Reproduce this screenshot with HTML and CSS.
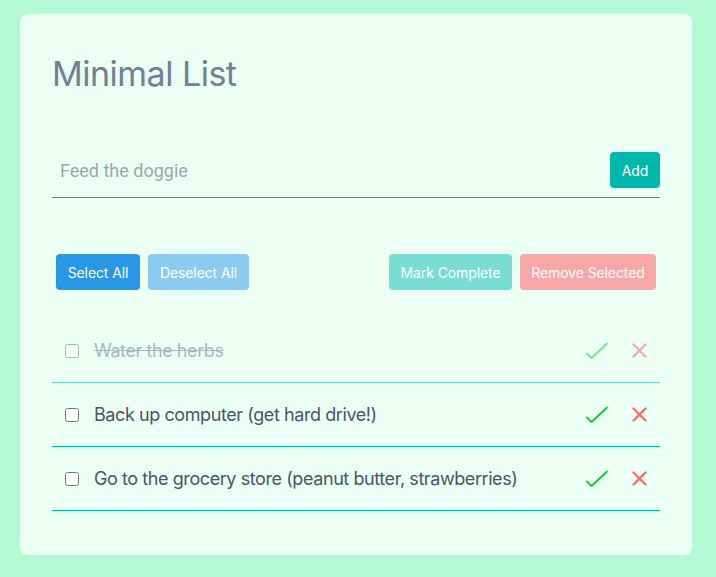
FILE: index.html
```html
<!DOCTYPE html>
<html lang="en">
<head>
<meta charset="utf-8">
<title>Minimal List</title>
<link rel="stylesheet" href="styles.css">
</head>
<body>
<main class="card">
  <h1 class="title">Minimal List</h1>
  <form class="add-row">
    <input class="add-input" type="text" placeholder="Feed the doggie">
    <button class="btn btn-add" type="button">Add</button>
  </form>
  <div class="toolbar">
    <div class="group">
      <button class="btn btn-blue" type="button">Select All</button>
      <button class="btn btn-blue-light" type="button">Deselect All</button>
    </div>
    <div class="group">
      <button class="btn btn-teal-light" type="button">Mark Complete</button>
      <button class="btn btn-red-light" type="button">Remove Selected</button>
    </div>
  </div>
  <ul class="list">
    <li class="item done">
      <input class="check" type="checkbox">
      <span class="text">Water the herbs</span>
      <span class="icon icon-check"><svg width="22" height="18" viewBox="0 0 22 18"><path d="M1 11.5 L5.5 16 L21 1.5" fill="none" stroke="currentColor" stroke-width="1.8" stroke-linecap="round" stroke-linejoin="round"/></svg></span>
      <span class="icon icon-x"><svg width="15" height="15" viewBox="0 0 15 15"><path d="M1.5 1.5 L13.5 13.5 M13.5 1.5 L1.5 13.5" fill="none" stroke="currentColor" stroke-width="2.3" stroke-linecap="round"/></svg></span>
    </li>
    <li class="item">
      <input class="check" type="checkbox">
      <span class="text">Back up computer (get hard drive!)</span>
      <span class="icon icon-check"><svg width="22" height="18" viewBox="0 0 22 18"><path d="M1 11.5 L5.5 16 L21 1.5" fill="none" stroke="currentColor" stroke-width="1.8" stroke-linecap="round" stroke-linejoin="round"/></svg></span>
      <span class="icon icon-x"><svg width="15" height="15" viewBox="0 0 15 15"><path d="M1.5 1.5 L13.5 13.5 M13.5 1.5 L1.5 13.5" fill="none" stroke="currentColor" stroke-width="2.3" stroke-linecap="round"/></svg></span>
    </li>
    <li class="item">
      <input class="check" type="checkbox">
      <span class="text">Go to the grocery store (peanut butter, strawberries)</span>
      <span class="icon icon-check"><svg width="22" height="18" viewBox="0 0 22 18"><path d="M1 11.5 L5.5 16 L21 1.5" fill="none" stroke="currentColor" stroke-width="1.8" stroke-linecap="round" stroke-linejoin="round"/></svg></span>
      <span class="icon icon-x"><svg width="15" height="15" viewBox="0 0 15 15"><path d="M1.5 1.5 L13.5 13.5 M13.5 1.5 L1.5 13.5" fill="none" stroke="currentColor" stroke-width="2.3" stroke-linecap="round"/></svg></span>
    </li>
  </ul>
</main>
</body>
</html>
```
FILE: styles.css
```css
* { box-sizing: border-box; }
html, body { margin: 0; padding: 0; }
body {
  background: #b3fad4;
  font-family: Inter, "Noto Sans", sans-serif;
  padding: 14px 24px 22px 20px;
}
.card {
  background: #ebfff4;
  border-radius: 8px;
  width: 672px;
  height: 541px;
  padding: 38px 32px 0 32px;
}
.title {
  margin: 0;
  font-size: 34px;
  font-weight: 400;
  line-height: 44px;
  color: #718096;
  letter-spacing: -0.5px;
}
.add-row {
  margin: 56px 0 0 0;
  display: flex;
  align-items: center;
  border-bottom: 1px solid #00b8ad;
  padding-bottom: 9px;
}
.add-input {
  flex: 1;
  border: none;
  background: transparent;
  outline: none;
  padding: 0 8px;
  font-family: Roboto, "Liberation Sans", sans-serif;
  font-size: 18px;
  color: #4a5568;
  height: 36px;
}
.add-input::placeholder { color: #9aa8ab; }
.btn {
  border: none;
  border-radius: 4px;
  height: 36px;
  padding: 0;
  color: #fff;
  font-family: Inter, "Noto Sans", sans-serif;
  font-size: 14px;
  letter-spacing: -0.1px;
  cursor: pointer;
}
.btn-add { background: #00b8a9; width: 50px; }
.toolbar {
  margin-top: 56px;
  padding: 0 4px;
  display: flex;
  justify-content: space-between;
}
.group { display: flex; gap: 8px; }
.btn-blue { background: #2797e6; width: 84px; }
.btn-blue-light { background: #8ccbef; width: 101px; }
.btn-teal-light { background: #79ddd4; width: 123px; }
.btn-red-light { background: #f6a8a6; width: 136px; }
.list {
  list-style: none;
  margin: 29px 0 0 0;
  padding: 0;
}
.item {
  display: flex;
  align-items: center;
  height: 64px;
  border-bottom: 1px solid #00b8ad;
  padding: 0 13px 0 11px;
}
.check {
  width: 14px;
  height: 14px;
  margin: 0 15px 0 2px;
  flex: none;
}
.text {
  flex: 1;
  font-size: 18px;
  color: #4a5568;
  letter-spacing: -0.42px;
}
.icon { display: flex; }
.icon-check { color: #12c93a; margin-right: 24px; }
.icon-x { color: #f76b6b; }
.done { opacity: 0.55; }
.done .text { text-decoration: line-through; color: #718096; }
```
